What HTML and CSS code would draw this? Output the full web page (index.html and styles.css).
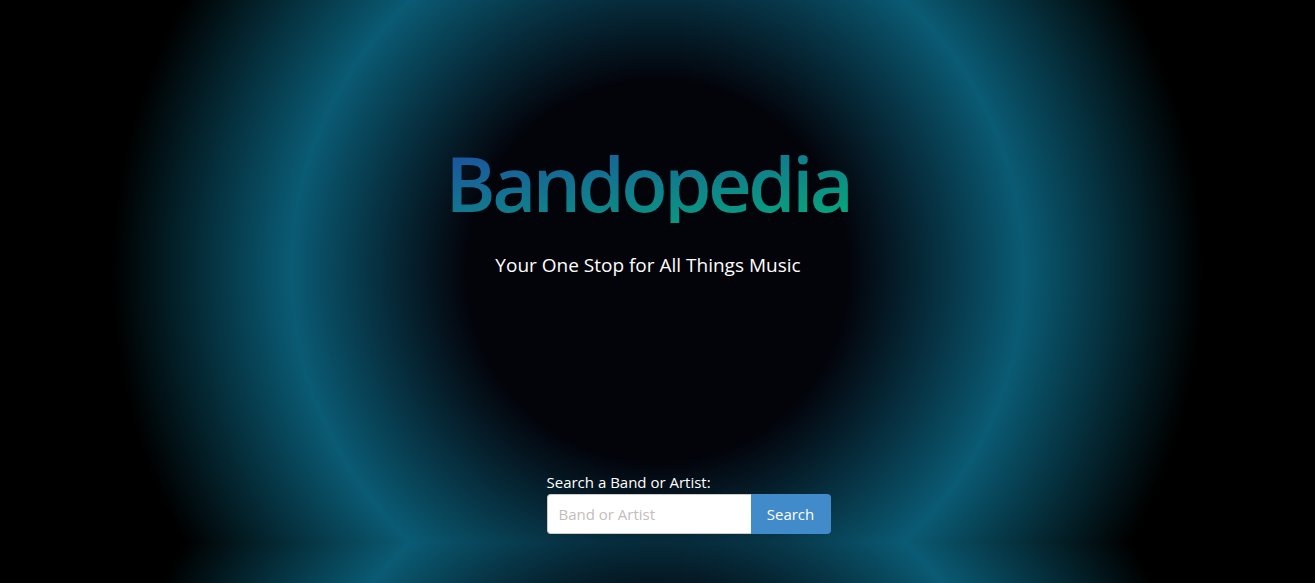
FILE: index.html
```html
<!DOCTYPE html>
<html lang="en">
<head>
<meta charset="utf-8">
<title>Bandopedia</title>
<link rel="stylesheet" href="styles.css">
</head>
<body>
  <header class="hero">
    <h1 class="brand"><span class="brand-text">Bandopedia</span></h1>
    <p class="tagline">Your One Stop for All Things Music</p>
  </header>
  <form class="search" onsubmit="return false;">
    <label class="search-label" for="q">Search a Band or Artist:</label>
    <div class="search-group">
      <input id="q" class="search-input" type="text" placeholder="Band or Artist">
      <button class="search-btn" type="submit">Search</button>
    </div>
  </form>
</body>
</html>
```

FILE: styles.css
```css
body {
  margin: 8px;
  font-family: "Open Sans", "Noto Sans", sans-serif;
  color: #fff;
  background: radial-gradient(circle at 50% 50%, #03030a 0px, #03030a 190px, #0a5b74 366px, #000 545px);
}

.hero {
  display: flex;
  flex-direction: column;
  align-items: center;
  padding: 135px 19px 0 0;
}

.brand {
  margin: 0;
  font-size: 76px;
  font-weight: 600;
  line-height: 80px;
  letter-spacing: -3.5px;
}

.brand-text {
  display: inline-block;
  padding: 0 4px;
  background: linear-gradient(to bottom right, #1d4ca2, #05ab78);
  -webkit-background-clip: text;
  background-clip: text;
  color: transparent;
}

.tagline {
  margin: 29px 0 0;
  font-size: 19px;
  line-height: 26px;
}

.search {
  width: 284px;
  margin: 194px 0 0 calc(50% - 111px);
  display: flex;
  flex-direction: column;
}

.search-label {
  font-size: 15px;
  line-height: 20px;
  margin-bottom: 2px;
}

.search-group {
  display: flex;
  height: 40px;
}

.search-input {
  flex: 1;
  min-width: 0;
  box-sizing: border-box;
  height: 40px;
  border: 1px solid #ccc;
  border-right: none;
  border-radius: 4px 0 0 4px;
  padding: 0 11px;
  font-family: inherit;
  font-size: 15px;
  color: #333;
  background: #fff;
  outline: none;
}

.search-input::placeholder {
  color: #c4bcbc;
}

.search-btn {
  width: 80px;
  height: 40px;
  border: none;
  border-radius: 0 4px 4px 0;
  background: #428bca;
  color: #fff;
  font-family: inherit;
  font-size: 15px;
  padding: 0;
}
```
